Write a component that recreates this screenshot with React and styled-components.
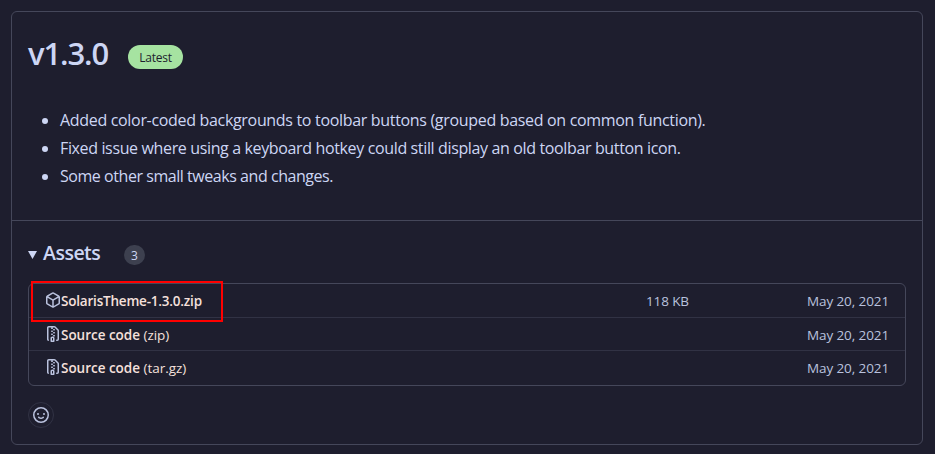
import React from "react";
import styled, { createGlobalStyle } from "styled-components";

const GlobalStyle = createGlobalStyle`
  * { box-sizing: border-box; }
  body {
    margin: 0;
    background: #1e1e2e;
    color: #cdd6f4;
    font-family: "Segoe UI", "Open Sans", "Noto Sans", sans-serif;
    overflow: hidden;
  }
`;

const Page = styled.main`
  height: 454px;
  padding: 11px 12px 9px 11px;
`;

const Card = styled.article`
  height: 434px;
  border: 1px solid #45475a;
  border-radius: 6px;
`;

const Release = styled.section`
  height: 209px;
  padding: 16px;
  border-bottom: 1px solid #45475a;
`;

const TitleRow = styled.header`
  display: flex;
  height: 52px;
`;

const Title = styled.h1`
  margin: 0;
  width: 100px;
  font-size: 31px;
  line-height: 51px;
  font-weight: 600;
  letter-spacing: -1.1px;
  white-space: nowrap;
`;

const Latest = styled.span`
  width: 55px;
  height: 24px;
  margin-top: 17px;
  border-radius: 12px;
  background: #a6e3a1;
  color: #1e1e2e;
  font-size: 12px;
  line-height: 25px;
  font-weight: 500;
  letter-spacing: -0.2px;
  text-align: center;
`;

const Notes = styled.ul`
  margin: 26px 0 0;
  padding-left: 32px;
  font-size: 16px;
  line-height: 28px;
`;

const Note = styled.li`
  white-space: nowrap;
  letter-spacing: ${(p) => p.$spacing};
  &::marker { font-family: "Noto Sans", sans-serif; }
`;

const Assets = styled.section`
  padding: 20px 16px 0;
`;

const AssetsHeading = styled.div`
  display: flex;
  align-items: center;
  height: 28px;
  margin-bottom: 14px;
`;

const Caret = styled.svg`
  width: 9px;
  height: 8px;
  margin-right: 6px;
  fill: #cdd6f4;
`;

const AssetsTitle = styled.h2`
  margin: -4px 0 0;
  width: 81px;
  font-size: 19.5px;
  line-height: 28px;
  font-weight: 600;
  letter-spacing: -0.5px;
`;

const Counter = styled.span`
  width: 21px;
  height: 20px;
  border-radius: 10px;
  background: #3d404f;
  font-size: 12px;
  font-weight: 500;
  line-height: 21px;
  text-align: center;
`;

const AssetList = styled.ul`
  position: relative;
  list-style: none;
  margin: 0;
  padding: 0;
  height: 103px;
  border: 1px solid #45475a;
  border-radius: 6px;
`;

const AssetRow = styled.li`
  display: grid;
  grid-template-columns: 500px 144px 1fr;
  align-items: center;
  height: ${(p) => p.$height};
  padding: ${(p) => p.$padTop || "0"} 16px 0;
  font-size: 13.5px;
  line-height: 20px;
  & + & { border-top: 1px solid #313244; }
`;

const AssetName = styled.span`
  display: flex;
  align-items: center;
  color: #f5e0dc;
  white-space: pre;
  letter-spacing: ${(p) => p.$spacing};
`;

const Strong = styled.span`
  font-weight: 600;
`;

const Icon = styled.svg`
  width: 16px;
  height: 16px;
  flex: none;
  margin-top: -2px;
  fill: #bac2de;
`;

const Meta = styled.span`
  color: #bac2de;
  text-align: right;
  letter-spacing: -0.1px;
`;

const Highlight = styled.div`
  position: absolute;
  left: 2px;
  top: -3px;
  width: 192px;
  height: 41px;
  border: 2px solid #f00;
`;

const Reaction = styled.button`
  display: flex;
  align-items: center;
  justify-content: center;
  width: 26px;
  height: 26px;
  margin: 16px 0 0;
  padding: 0;
  border: 1px solid #313244;
  border-radius: 50%;
  background: transparent;
`;

const ReactionIcon = styled.svg`
  width: 16px;
  height: 16px;
  fill: #bac2de;
`;

const packagePath =
  "m8.878.392 5.25 3.045c.54.314.872.89.872 1.514v6.098a1.75 1.75 0 0 1-.872 1.514l-5.25 3.045a1.75 1.75 0 0 1-1.756 0l-5.25-3.045A1.75 1.75 0 0 1 1 11.049V4.951c0-.624.332-1.201.872-1.514L7.122.392a1.75 1.75 0 0 1 1.756 0ZM7.875 1.69l-4.63 2.685L8 7.133l4.755-2.758-4.63-2.685a.248.248 0 0 0-.25 0ZM2.5 5.677v5.372c0 .09.047.171.125.216l4.625 2.683V8.432Zm6.25 8.271 4.625-2.683a.25.25 0 0 0 .125-.216V5.677L8.75 8.432Z";
const zipPath =
  "M3.5 1.75v11.5c0 .09.048.173.126.217a.75.75 0 0 1-.752 1.298A1.748 1.748 0 0 1 2 13.25V1.75C2 .784 2.784 0 3.75 0h5.586c.464 0 .909.185 1.237.513l2.914 2.914c.329.328.513.773.513 1.237v8.586A1.75 1.75 0 0 1 12.25 15h-.5a.75.75 0 0 1 0-1.5h.5a.25.25 0 0 0 .25-.25V4.664a.25.25 0 0 0-.073-.177L9.513 1.573a.25.25 0 0 0-.177-.073H7.25a.75.75 0 0 1 0 1.5h-.5a.75.75 0 0 1 0-1.5h-3a.25.25 0 0 0-.25.25Zm3.75 8.75h.5c.966 0 1.75.784 1.75 1.75v3a.75.75 0 0 1-.75.75h-2.5a.75.75 0 0 1-.75-.75v-3c0-.966.784-1.75 1.75-1.75ZM6 5.25a.75.75 0 0 1 .75-.75h.5a.75.75 0 0 1 0 1.5h-.5A.75.75 0 0 1 6 5.25Zm.75 2.25h.5a.75.75 0 0 1 0 1.5h-.5a.75.75 0 0 1 0-1.5ZM8 6.75A.75.75 0 0 1 8.75 6h.5a.75.75 0 0 1 0 1.5h-.5A.75.75 0 0 1 8 6.75ZM8.75 3h.5a.75.75 0 0 1 0 1.5h-.5a.75.75 0 0 1 0-1.5ZM8 9.75A.75.75 0 0 1 8.75 9h.5a.75.75 0 0 1 0 1.5h-.5A.75.75 0 0 1 8 9.75Zm-1 2.5v2.25h1v-2.25a.25.25 0 0 0-.25-.25h-.5a.25.25 0 0 0-.25.25Z";
const smileyPath =
  "M8 0a8 8 0 1 1 0 16A8 8 0 0 1 8 0ZM1.5 8a6.5 6.5 0 1 0 13 0 6.5 6.5 0 0 0-13 0Zm3.82 1.636a.75.75 0 0 1 1.038.175l.007.009c.103.118.22.222.35.31.264.178.683.37 1.285.37.602 0 1.02-.192 1.285-.371.13-.088.247-.192.35-.31l.007-.008a.75.75 0 0 1 1.222.87c-.2.28-.42.5-.72.68-.63.418-1.37.638-2.127.629-.946 0-1.652-.308-2.126-.63a3.331 3.331 0 0 1-.75-.7.75.75 0 0 1 .183-1.044ZM12 7a1 1 0 1 1-2 0 1 1 0 0 1 2 0ZM5 8a1 1 0 1 1 0-2 1 1 0 0 1 0 2Z";

const notes = [
  { text: "Added color-coded backgrounds to toolbar buttons (grouped based on common function).", spacing: "-0.32px" },
  { text: "Fixed issue where using a keyboard hotkey could still display an old toolbar button icon.", spacing: "-0.36px" },
  { text: "Some other small tweaks and changes.", spacing: "-0.45px" },
];

const assets = [
  { name: "SolarisTheme-1.3.0.zip", icon: packagePath, size: "118 KB", height: "33px", spacing: "-0.2px" },
  { name: "Source code", kind: " (zip)", icon: zipPath, height: "33px", padTop: "2px", spacing: "-0.02px" },
  { name: "Source code", kind: " (tar.gz)", icon: zipPath, height: "35px", spacing: "-0.02px" },
];

export default function App() {
  return (
    <Page>
      <GlobalStyle />
      <Card>
        <Release>
          <TitleRow>
            <Title>v1.3.0</Title>
            <Latest>Latest</Latest>
          </TitleRow>
          <Notes>
            {notes.map((n) => (
              <Note key={n.text} $spacing={n.spacing}>{n.text}</Note>
            ))}
          </Notes>
        </Release>
        <Assets>
          <AssetsHeading>
            <Caret viewBox="0 0 9 8"><path d="M0 0h9L4.5 8Z" /></Caret>
            <AssetsTitle>Assets</AssetsTitle>
            <Counter>3</Counter>
          </AssetsHeading>
          <AssetList>
            {assets.map((a) => (
              <AssetRow key={a.name + a.kind} $height={a.height} $padTop={a.padTop}>
                <AssetName $spacing={a.spacing}>
                  <Icon viewBox="0 0 16 16"><path fillRule="evenodd" d={a.icon} /></Icon>
                  <Strong>{a.name}</Strong>
                  {a.kind && <span>{a.kind}</span>}
                </AssetName>
                <Meta>{a.size}</Meta>
                <Meta>May 20, 2021</Meta>
              </AssetRow>
            ))}
            <Highlight />
          </AssetList>
          <Reaction aria-label="Add reaction">
            <ReactionIcon viewBox="0 0 16 16"><path fillRule="evenodd" d={smileyPath} /></ReactionIcon>
          </Reaction>
        </Assets>
      </Card>
    </Page>
  );
}
